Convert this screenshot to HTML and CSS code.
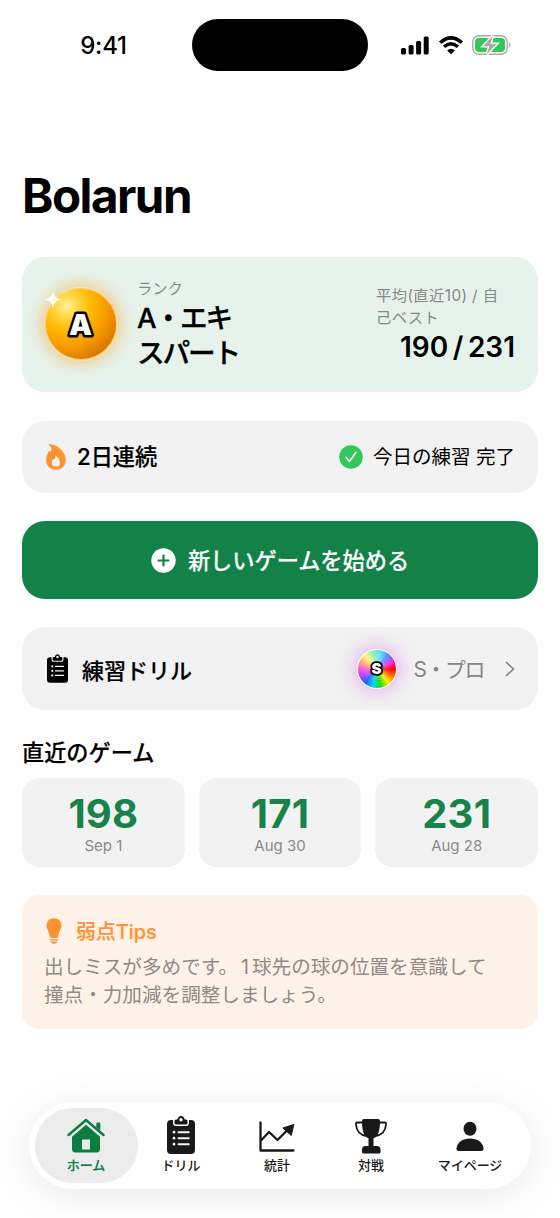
FILE: index.html
```html
<!DOCTYPE html>
<html lang="ja">
<head>
<meta charset="utf-8">
<title>Bolarun</title>
<link rel="stylesheet" href="styles.css">
</head>
<body>
<div class="screen">
  <header class="status">
    <span class="time">9:41</span>
    <span class="island"></span>
    <span class="signals">
      <svg width="28" height="19" viewBox="0 0 28 19"><rect x="0" y="12" width="5" height="6.5" rx="1.5"/><rect x="7.6" y="9" width="5" height="9.5" rx="1.5"/><rect x="15.1" y="5" width="5" height="13.5" rx="1.5"/><rect x="22.7" y="0.5" width="5" height="18" rx="1.5"/></svg>
      <svg class="wifi" width="24" height="19" viewBox="0 0 24 19"><g fill="none" stroke="#000" stroke-width="3.5"><path d="M1.2 6.7Q12-3 22.8 6.7"/><path d="M5 10.8Q12 4.7 19 10.8"/></g><path d="M12 18.3 8.1 14.4Q12 11.3 15.9 14.4Z"/></svg>
      <svg class="battery" width="39" height="20" viewBox="0 0 39 20"><rect x=".8" y=".8" width="34.4" height="18.4" rx="6" fill="#fff" stroke="#aaa" stroke-width="1.4"/><rect x="3" y="3" width="30" height="14" rx="4" fill="#34c759"/><path d="M36.8 7v6q1.7-.8 1.7-3t-1.7-3Z" fill="#aaa"/><path d="M20.8.8 11 11.2h6.3L14.9 19.2 25 8.8h-6.5Z" fill="#aaa" stroke="#fff" stroke-width="2.6" paint-order="stroke"/></svg>
    </span>
  </header>

  <main class="content">
    <h1 class="title">Bolarun</h1>

    <section class="card rank">
      <svg class="ball" width="74" height="74" viewBox="0 0 74 74">
        <defs><radialGradient id="gold" cx=".3" cy=".25" r=".82"><stop offset="0" stop-color="#fff0a0"/><stop offset=".16" stop-color="#ffdc50"/><stop offset=".42" stop-color="#ffb900"/><stop offset=".7" stop-color="#f69a00"/><stop offset="1" stop-color="#d67300"/></radialGradient></defs>
        <circle cx="37" cy="37" r="35.8" fill="url(#gold)" stroke="#ffd07a" stroke-width="1.5"/>
        <text x="36.5" y="47.8" class="ball-a">A</text>
        <path d="M9 4Q10 11.500 17.500 12.500 10 13.500 9 21.500 8 13.500.5 12.500 8 11.500 9 4Z" fill="#fffdf2"/>
      </svg>
      <div class="rank-name">
        <div class="caption">ランク</div>
        <div class="rank-title">A・エキ<br>スパート</div>
      </div>
      <div class="rank-stats">
        <div class="caption average-caption">平均(直近10) / 自<br>己ベスト</div>
        <div class="average">190 / 231</div>
      </div>
    </section>

    <section class="card streak">
      <svg width="20" height="26" viewBox="0 0 20 26"><path fill="#ff9230" fill-rule="evenodd" d="M3 .3C11 .2 20 7.500 19.800 16.600 19.600 22.200 15.400 25.700 10 25.700 4.200 25.700.2 22 .2 16.200.2 12.500 1.600 9.500 2.400 7.700 3.100 6.400 4.200 6.900 4.400 8.400 6.400 5.500 5.800 3.300 2.800 1.100 2.300.7 2.500.3 3 .3ZM9.300 11.500C9.900 13.700 8.600 15 7.900 15.700 7 14.900 6.200 15.900 5.900 18.100 5.500 21.100 7.300 22.700 9.900 22.700 12.500 22.700 14 21 13.900 18.400 13.800 15.300 11.700 13.100 9.300 11.500Z"/></svg>
      <strong class="streak-days">2日連続</strong>
      <span class="done"><svg width="24" height="24" viewBox="0 0 24 24"><circle cx="12" cy="12" r="11.8" fill="#34c759"/><path d="m7.100 12.400 3.400 4L17 7.300" fill="none" stroke="#fff" stroke-width="1.6" stroke-linecap="round" stroke-linejoin="round"/></svg><span class="done-text">今日の練習 完了</span></span>
    </section>

    <button class="start">
      <svg width="25" height="25" viewBox="0 0 25 25"><circle cx="12.500" cy="12.500" r="12.200" fill="#fff"/><path d="M12.500 7.500v10M7.500 12.500h10" stroke="#128249" stroke-width="2.200" stroke-linecap="round"/></svg>
      <span class="start-text">新しいゲームを始める</span>
    </button>

    <section class="card drill">
      <svg width="21" height="29" viewBox="0 0 28 38"><use href="#clipboard"/></svg>
      <strong class="drill-name">練習ドリル</strong>
      <span class="rainbow"><svg width="40" height="40" viewBox="0 0 40 40"><text x="19.500" y="25.200" class="ball-s">S</text></svg></span>
      <span class="drill-rank">S・プロ</span>
      <svg class="chevron" width="10" height="16" viewBox="0 0 10 16"><path d="m1.500 1.500 7 6.500-7 6.500" fill="none" stroke="#858585" stroke-width="1.700" stroke-linecap="round" stroke-linejoin="round"/></svg>
    </section>

    <h2 class="recent-heading">直近のゲーム</h2>
    <section class="games">
      <div class="game"><b>198</b><span>Sep 1</span></div>
      <div class="game"><b>171</b><span>Aug 30</span></div>
      <div class="game"><b>231</b><span>Aug 28</span></div>
    </section>

    <section class="tips">
      <h3 class="tips-title"><svg width="16" height="26" viewBox="0 0 16 26"><path fill="#ff9230" d="M8 .3C12.500.3 15.500 3.300 15.500 7.700 15.500 11 12.700 13.500 12.300 18.300 12.200 19.400 11.600 20 10.600 20H5.400C4.400 20 3.800 19.400 3.700 18.300 3.300 13.500.5 11 .5 7.700.5 3.300 3.500.3 8 .3ZM3.800 21.200h8.400v1.400H3.800ZM4.400 23.500h7.200Q10.500 25.700 8 25.700T4.400 23.500Z"/></svg><span>弱点Tips</span></h3>
      <p class="tips-text">出しミスが多めです。<span class="numeral">1</span>球先の球の位置を意識して<br>撞点・力加減を調整しましょう。</p>
    </section>
  </main>

  <nav class="tabs">
    <a class="tab active"><svg width="38" height="38" viewBox="0 0 38 38"><g fill="none" stroke="#0d7c41" stroke-width="2.400" stroke-linecap="round" stroke-linejoin="round"><path d="M1.500 19 19 4 36.500 19"/></g><path fill="#0d7c41" fill-rule="evenodd" d="M29.300 7.500q0-1 1-1h2q1 0 1 1v7l-4-3.400ZM19 8.800 33 20.700V33q0 3.500-3.500 3.500h-21Q5 36.500 5 33V20.700ZM15 23.500v10h8v-10Z"/></svg><span>ホーム</span></a>
    <a class="tab"><svg width="28" height="38" viewBox="0 0 28 38"><g id="clipboard"><path fill="currentColor" fill-rule="evenodd" d="M4 4H6v2.500Q6 10 9 10h10q3 0 3-3.500V4h2q4 0 4 4v26q0 4-4 4H4q-4 0-4-4V8Q0 4 4 4Z"/><path fill="currentColor" fill-rule="evenodd" d="M9 3.500h1.300Q11 0 14 0t3.700 3.500H19q1.500 0 1.500 1.500v2q0 1.500-1.500 1.500H9Q7.500 8.500 7.500 7V5Q7.500 3.500 9 3.500ZM14 2a1.700 1.700 0 1 0 0 3.400A1.700 1.700 0 0 0 14 2Z"/><g class="clip-lines"><path d="M11.500 16.200h10.300M11.500 22.200h10.300M11.500 28.200h10.300"/><path d="M7 16.200h0M7 22.200h0M7 28.200h0" class="clip-dots"/></g></g></svg><span>ドリル</span></a>
    <a class="tab"><svg width="36" height="38" viewBox="0 0 36 38"><path d="M1.500 6.500v28h33M2 24.500l8-8.500 8.500 8L29 13.500" fill="none" stroke="#191919" stroke-width="2.300" stroke-linecap="round" stroke-linejoin="round"/><path d="M34.800 8.500 32.300 19.500 23.800 12Z" fill="#191919" stroke="#191919" stroke-linejoin="round"/></svg><span>統計</span></a>
    <a class="tab"><svg width="32" height="38" viewBox="0 0 32 38"><path d="M8 6.500H2Q.8 6.500 1 8.500 1.800 19 12 20M24 6.500h6q1.200 0 1 2Q30.200 19 20 20" fill="none" stroke="#191919" stroke-width="1.800"/><path fill="#191919" d="M9 3h14q2 0 2 2C25 14 23.500 20.500 18.500 22.300V30h3.500q3.500 0 3.500 3.500V36q0 1.500-1.500 1.500H8.500Q7 37.500 7 36v-2.500Q7 30 10.500 30H13.500V22.300C8.500 20.500 7 14 7 5q0-2 2-2Z"/></svg><span>対戦</span></a>
    <a class="tab"><svg width="28" height="38" viewBox="0 0 28 38"><g fill="#191919"><ellipse cx="14" cy="12.800" rx="6.500" ry="7"/><path d="M3 35Q.3 35 .5 32.500C1 26.500 6.500 22.500 14 22.500s13 4 13.500 10Q27.700 35 25 35Z"/></g></svg><span>マイページ</span></a>
  </nav>
</div>
</body>
</html>
```
FILE: styles.css
```css
* { box-sizing: border-box; }

body {
  margin: 0;
  background: #fff;
  color: #000;
  font-family: Inter, "Noto Sans CJK JP", sans-serif;
}

svg { display: block; flex: none; }

h1, h2, h3, p { margin: 0; }

.screen {
  width: 560px;
  height: 1218px;
  display: flex;
  flex-direction: column;
  overflow: hidden;
}

/* Status bar */
.status {
  height: 90px;
  flex: none;
  display: grid;
  grid-template-columns: 192px 176px 192px;
  align-items: center;
}
.time {
  padding: 2px 0 0 15px;
  text-align: center;
  font-size: 24px;
  line-height: 28px;
  font-weight: 550;
  letter-spacing: -0.2px;
}
.island { height: 52px; border-radius: 26px; background: #000; }
.signals { display: flex; align-items: center; padding-left: 33px; }
.wifi { margin-left: 10px; }
.battery { margin-left: 9px; }

/* Content */
.content { padding: 0 22px; flex: 1; }
.title {
  padding-top: 78px;
  height: 167px;
  font-size: 47.500px;
  line-height: 56px;
  font-weight: 700;
  letter-spacing: -1.500px;
  white-space: nowrap;
}
.card {
  display: flex;
  align-items: center;
  border-radius: 23px;
  background: #f2f2f2;
  padding: 0 23px;
  white-space: nowrap;
}
.caption { font-size: 15.300px; line-height: 22px; color: #838a87; }

.rank {
  height: 135px;
  padding-left: 22px;
  background: #e6f3ec;
}
.ball {
  margin-bottom: 1px;
  overflow: visible;
  border-radius: 50%;
  box-shadow: 0 0 18px rgba(255, 149, 0, .62);
}
.ball-a, .ball-s {
  font-family: Inter, sans-serif;
  font-weight: 900;
  text-anchor: middle;
  fill: #fff;
  stroke: #000;
  stroke-linejoin: round;
  paint-order: stroke;
}
.ball-a { font-size: 29px; stroke-width: 5px; }
.ball-s { font-size: 15px; stroke-width: 3.500px; }
.rank-name { margin-left: 19px; }
.rank-title {
  margin-top: 1px;
  font-size: 27.600px;
  line-height: 35px;
  font-weight: 500;
  -webkit-text-stroke: .3px currentColor;
  letter-spacing: -2.100px;
}
.rank-stats { margin: 2px 0 0 auto; width: 139px; }
.average-caption { letter-spacing: .4px; }
.average {
  text-align: right;
  font-size: 28px;
  line-height: 37px;
  font-weight: 600;
  word-spacing: -2.500px;
}

.streak { height: 72px; margin-top: 29px; padding-left: 24px; }
.streak-days {
  margin-left: 11px;
  padding-bottom: 4px;
  font-size: 22.200px;
  font-weight: 500;
  -webkit-text-stroke: .2px currentColor;
}
.done { margin-left: auto; display: flex; align-items: center; gap: 10px; font-size: 19.500px; }
.done-text { padding-bottom: 4px; }

.start {
  display: flex;
  align-items: center;
  justify-content: center;
  gap: 12px;
  width: 100%;
  height: 78px;
  margin-top: 28px;
  border: 0;
  border-radius: 23px;
  background: #128249;
  color: #fff;
  font-family: inherit;
  font-size: 22.200px;
  font-weight: 500;
  -webkit-text-stroke: .15px currentColor;
}
.start-text { padding-bottom: 3px; }

.drill { height: 83px; margin-top: 28px; padding-left: 25px; }
.drill-name {
  margin-left: 14px;
  font-size: 22px;
  font-weight: 500;
  -webkit-text-stroke: .2px currentColor;
}
.clip-lines { fill: none; stroke: #f5f5f5; stroke-width: 1.900px; stroke-linecap: round; }
.clip-dots { stroke-width: 2.800px; }
.rainbow {
  display: grid;
  place-content: center;
  width: 40px;
  height: 40px;
  margin-left: auto;
  border-radius: 50%;
  border: 1px solid #fff;
  background:
    radial-gradient(circle at 35% 25%, rgba(255, 255, 255, .6), rgba(255, 255, 255, 0) 62%),
    conic-gradient(from 90deg, #f00, #ff9000 30deg, #fff000 50deg, #20d820 78deg, #00d8f0 104deg, #1763ff 130deg, #c51cff 160deg, #ff26b9 182deg, #ff8c40 207deg, #fff000 230deg, #31dd80 258deg, #20cfff 283deg, #287dff 306deg, #ef20ef 335deg, #f00);
  box-shadow: 0 0 20px rgba(205, 65, 240, .5);
}
.drill-rank { margin-left: 17px; padding-bottom: 1px; font-size: 20.900px; letter-spacing: -1.400px; color: #858585; }
.chevron { margin-left: 21px; }

.recent-heading {
  padding-top: 26px;
  height: 68px;
  font-size: 22.200px;
  line-height: 33px;
  font-weight: 500;
  -webkit-text-stroke: .2px currentColor;
}
.games { display: grid; grid-template-columns: repeat(3, 1fr); gap: 14px; }
.game {
  height: 89px;
  padding-top: 13px;
  border-radius: 18px;
  background: #f2f2f2;
  text-align: center;
}
.game b { display: block; font-size: 40px; line-height: 45px; font-weight: 700; letter-spacing: .2px; color: #178249; }
.game span { display: block; font-size: 15px; line-height: 20px; color: #8a8a8a; }

.tips {
  height: 134px;
  margin-top: 28px;
  padding: 22px;
  border-radius: 17px;
  background: #fff3e9;
}
.tips-title {
  display: flex;
  align-items: center;
  gap: 14px;
  height: 30px;
  padding-left: 2px;
  font-size: 19.900px;
  line-height: 30px;
  font-weight: 500;
  -webkit-text-stroke: .2px currentColor;
  color: #ff9230;
}
.tips-title svg { margin-bottom: 2px; }
.tips-text { margin-top: 6px; font-size: 19.600px; line-height: 28px; color: #918983; white-space: nowrap; }
.numeral { margin: 0 3px; }

/* Tab bar */
.tabs {
  display: grid;
  grid-template-columns: 103px 86px 106px 82px 116px;
  flex: none;
  width: 502px;
  height: 87px;
  margin: 0 29px 29px;
  padding: 6px 3px 6px 6px;
  border-radius: 44px;
  background: #fff;
  box-shadow: 0 6px 40px rgba(0, 0, 0, .09);
}
.tab {
  padding-top: 8px;
  display: flex;
  flex-direction: column;
  align-items: center;
  gap: 1px;
  border-radius: 38px;
  font-size: 13px;
  line-height: 20px;
  font-weight: 500;
  color: #191919;
  white-space: nowrap;
}
.tab.active { padding-right: 1px; background: #ececec; color: #0d7c41; -webkit-text-stroke: .2px currentColor; }
```
